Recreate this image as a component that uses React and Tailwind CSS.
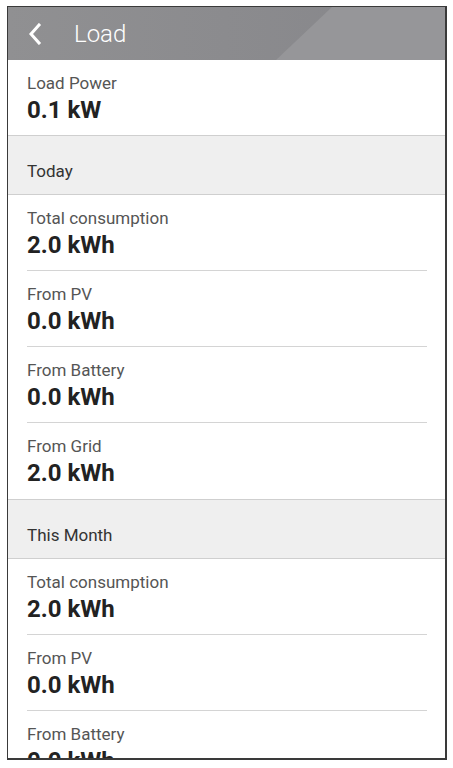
import React from "react";

function Item({ label, value, last, first }) {
  return (
    <div className="shrink-0 pl-[19px] pr-[18px]">
      <div className={(first ? "h-[75px] " : "h-[76px] ") + "pt-[13px] " + (last ? "" : "border-b border-[#d4d4d4]")}>
        <div className="text-[17px] leading-[21px] text-[#555555]">{label}</div>
        <div className="mt-[2px] text-[24px] leading-[28px] font-bold text-[#222222]">{value}</div>
      </div>
    </div>
  );
}

function SectionHeader({ title }) {
  return (
    <div className="shrink-0 h-[60px] bg-[#efefef] border-y border-[#cfcfcf] pl-[19px] pt-[25px] text-[17px] leading-[21px] text-[#333333]">
      {title}
    </div>
  );
}

export default function App() {
  return (
    <div className="w-[453px] h-[768px] bg-white pt-[6px] pl-[7px]" style={{ fontFamily: "Roboto, 'Noto Sans', sans-serif" }}>
      <div className="w-[440px] h-[754px] border-l border-t border-r-2 border-b-2 border-[#3a3a3a] overflow-hidden flex flex-col">
        <div className="relative h-[53px] shrink-0 bg-linear-to-r from-[#909092] to-[#86868a] overflow-hidden">
          <div
            className="absolute inset-0 bg-[#969699]"
            style={{ clipPath: "polygon(324px 0, 100% 0, 100% 100%, 268px 100%)" }}
          />
          <div className="relative flex items-center h-full">
            <svg width="14" height="22" viewBox="0 0 14 22" className="ml-[20px] mt-[1px]">
              <path d="M11 2 L3 11 L11 20" fill="none" stroke="white" strokeWidth="3" strokeLinecap="square" />
            </svg>
            <div className="ml-[32px] text-[24px] leading-[28px] font-light text-white">Load</div>
          </div>
        </div>
        <Item label="Load Power" value="0.1 kW" first last />
        <SectionHeader title="Today" />
        <Item label="Total consumption" value="2.0 kWh" />
        <Item label="From PV" value="0.0 kWh" />
        <Item label="From Battery" value="0.0 kWh" />
        <Item label="From Grid" value="2.0 kWh" last />
        <SectionHeader title="This Month" />
        <Item label="Total consumption" value="2.0 kWh" />
        <Item label="From PV" value="0.0 kWh" />
        <Item label="From Battery" value="0.0 kWh" />
      </div>
    </div>
  );
}
